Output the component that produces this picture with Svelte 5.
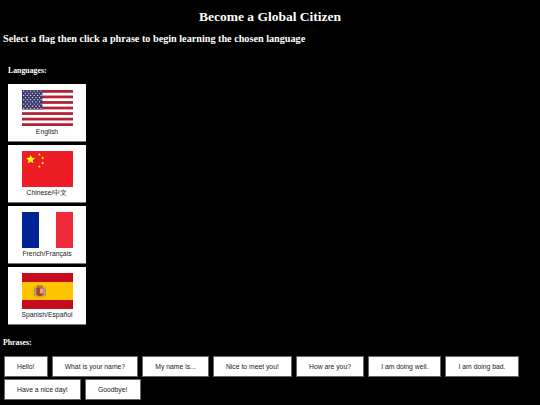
<script>
  const languages = [
    { id: "us", label: "English" },
    { id: "cn", label: "Chinese/中文" },
    { id: "fr", label: "French/Français" },
    { id: "es", label: "Spanish/Español" },
  ];

  const phrases = [
    "Hello!",
    "What is your name?",
    "My name is...",
    "Nice to meet you!",
    "How are you?",
    "I am doing well.",
    "I am doing bad.",
    "Have a nice day!",
    "Goodbye!",
  ];

  let selected = $state("");

  // 13 stripes, the red ones only
  const redStripes = [0, 2, 4, 6, 8, 10, 12];

  const stars = [];
  for (let row = 0; row < 9; row++) {
    const count = row % 2 ? 5 : 6;
    for (let col = 0; col < count; col++) {
      stars.push({ x: (row % 2 ? 3.4 : 1.7) + col * 3.4, y: 1.1 + row * 2.15 });
    }
  }

  const star = "M0,-1 L.294,-.405 .951,-.309 .476,.155 .588,.809 0,.5 -.588,.809 -.476,.155 -.951,-.309 -.294,-.405Z";
</script>

<main>
  <h1>Become a Global Citizen</h1>
  <h2>Select a flag then click a phrase to begin learning the chosen language</h2>

  <h3 class="lang-title">Languages:</h3>
  <div class="languages">
    {#each languages as lang}
      <button class="card" class:selected={selected === lang.id} onclick={() => (selected = lang.id)}>
        <svg class="flag" viewBox="0 0 50 36" preserveAspectRatio="none">
          {#if lang.id === "us"}
            <rect width="50" height="36" fill="#fff" />
            {#each redStripes as i}
              <rect y={i * 2.77} width="50" height="2.77" fill="#b22234" />
            {/each}
            <rect width="20" height="19.4" fill="#3c3b6e" />
            {#each stars as s}
              <circle cx={s.x} cy={s.y} r=".6" fill="#fff" />
            {/each}
          {:else if lang.id === "cn"}
            <rect width="50" height="36" fill="#ee1c25" />
            <path d={star} transform="translate(8.5 8.5) scale(4.6)" fill="#ffff00" />
            <path d={star} transform="translate(17 3.6) scale(1.5)" fill="#ffff00" />
            <path d={star} transform="translate(20.3 7) scale(1.5)" fill="#ffff00" />
            <path d={star} transform="translate(20.3 12) scale(1.5)" fill="#ffff00" />
            <path d={star} transform="translate(17 15.6) scale(1.5)" fill="#ffff00" />
          {:else if lang.id === "fr"}
            <rect width="16.7" height="36" fill="#002395" />
            <rect x="16.7" width="16.6" height="36" fill="#fff" />
            <rect x="33.3" width="16.7" height="36" fill="#ed2939" />
          {:else}
            <rect width="50" height="36" fill="#c60b1e" />
            <rect y="9" width="50" height="18" fill="#ffc400" />
            <!-- coat of arms, only a few pixels wide at this size -->
            <ellipse cx="17.5" cy="18.5" rx="6" ry="6.5" fill="#d9a441" />
            <rect x="11.5" y="14.5" width="1.6" height="9" fill="#a89a6a" />
            <rect x="22" y="14.5" width="1.6" height="9" fill="#a89a6a" />
            <rect x="14.5" y="12.5" width="6" height="2.5" fill="#b5762a" />
            <path d="M14 15h7v6.5q-3.5 3.5-7 0Z" fill="#a8442a" />
            <rect x="17.5" y="15.5" width="3.5" height="5" fill="#dba3a3" />
          {/if}
        </svg>
        <span>{lang.label}</span>
      </button>
    {/each}
  </div>

  <h3 class="phrase-title">Phrases:</h3>
  <div class="phrases">
    {#each phrases as phrase}
      <button class="phrase">{phrase}</button>
    {/each}
  </div>
</main>

<style>
  :global(body) {
    margin: 0;
    background: #000;
    color: #fff;
    font-family: "Liberation Serif", "Times New Roman", serif;
  }

  main {
    height: 405px;
    overflow: hidden;
    box-sizing: border-box;
    padding-top: 8px;
  }

  h1 {
    margin: 0;
    font-size: 13.5px;
    line-height: 17px;
    text-align: center;
  }

  h2 {
    margin: 7px 0 0 3px;
    font-size: 10.2px;
    line-height: 14px;
  }

  h3 {
    margin: 0;
    font-size: 7.8px;
    line-height: 10px;
  }

  .lang-title {
    margin: 20px 0 0 8px;
  }

  .languages {
    display: flex;
    flex-direction: column;
    gap: 3px;
    margin: 8px 0 0 8px;
    width: 78px;
  }

  .card {
    display: flex;
    flex-direction: column;
    align-items: center;
    height: 58px;
    padding: 6px 0 0;
    box-sizing: border-box;
    background: #fff;
    border: 0;
    border-bottom: 1px solid #777;
    font-family: "Liberation Sans", Arial, sans-serif;
    font-size: 6.8px;
    line-height: 8px;
    color: #222;
    cursor: pointer;
  }

  .card span {
    margin-top: 2px;
  }

  .flag {
    display: block;
    width: 51px;
    height: 36px;
  }

  .phrase-title {
    margin: 13px 0 0 3px;
  }

  .phrases {
    display: flex;
    flex-wrap: wrap;
    gap: 2.5px 4px;
    margin: 8px 0 0 4px;
  }

  .phrase {
    height: 20.5px;
    padding: 0 12.1px;
    box-sizing: border-box;
    background: #fff;
    border: 1px solid #666;
    font-family: "Liberation Sans", Arial, sans-serif;
    font-size: 6.8px;
    color: #222;
    cursor: pointer;
  }
</style>
